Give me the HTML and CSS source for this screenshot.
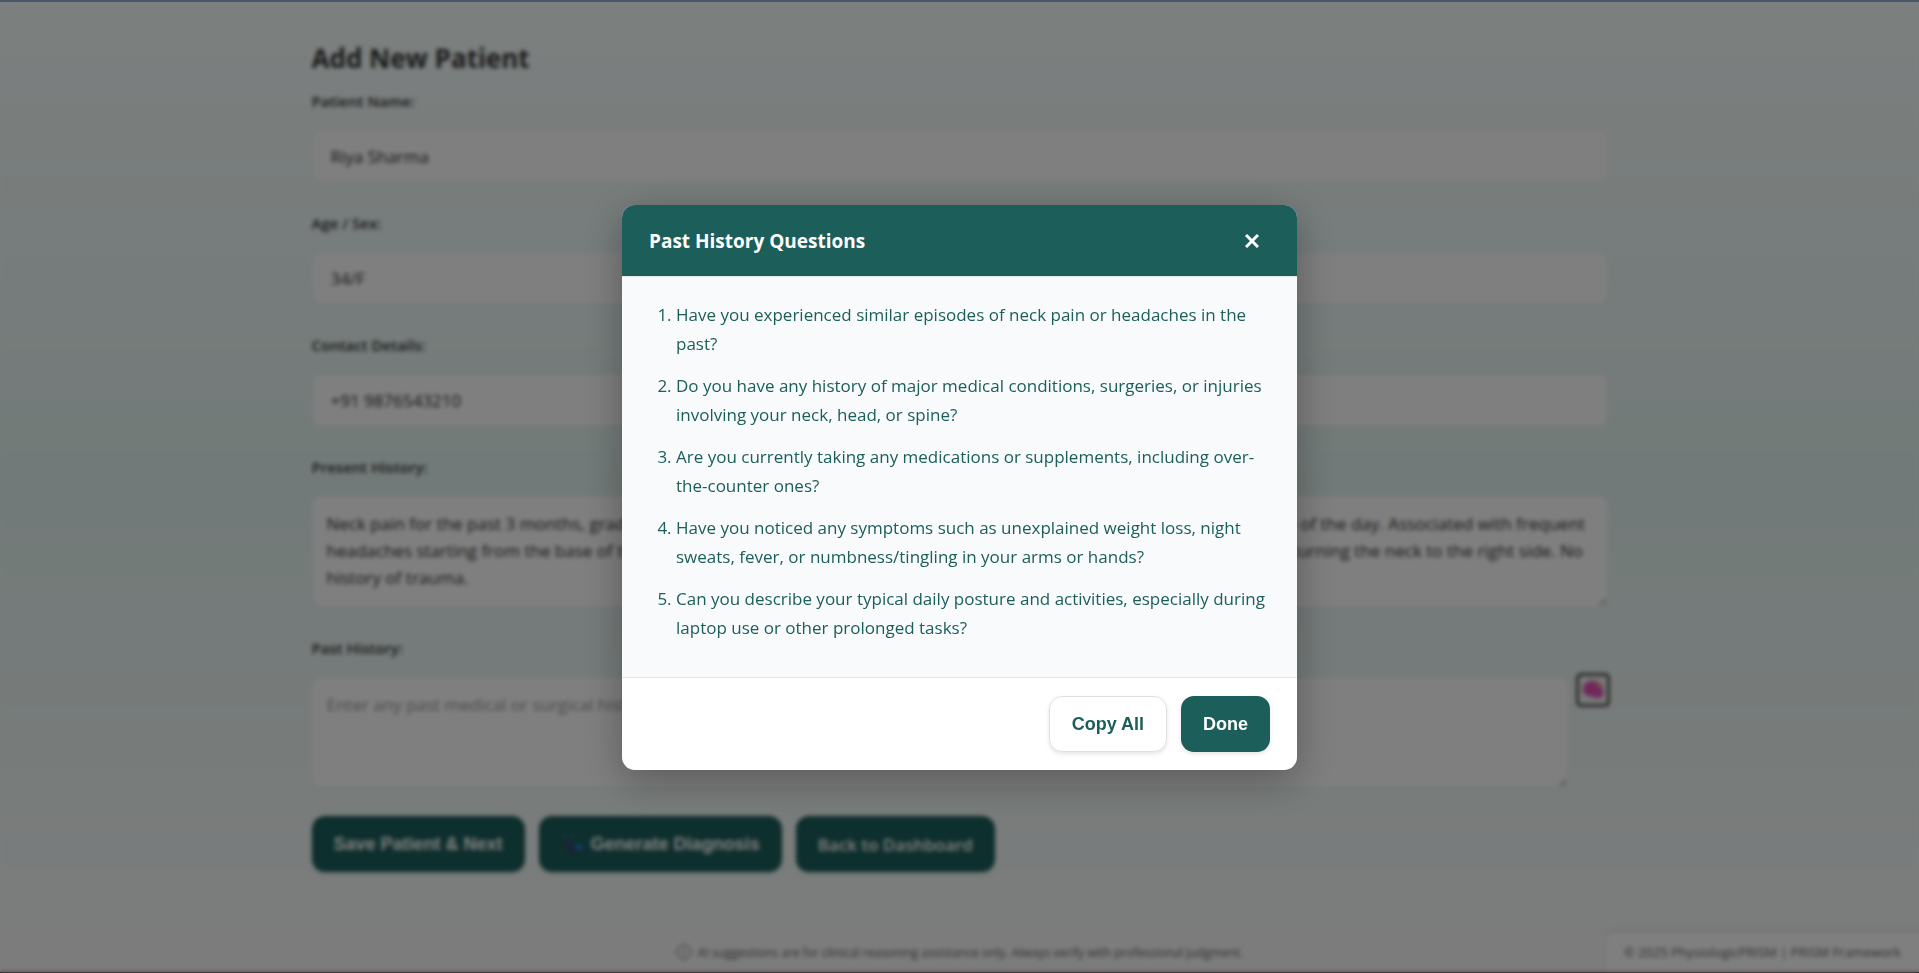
FILE: index.html
```html
<!DOCTYPE html>
<html lang="en">
<head>
    <meta charset="UTF-8">
    <meta name="viewport" content="width=device-width, initial-scale=1.0">
    <title>Add New Patient | PhysiologicPRISM</title>
    <link rel="stylesheet" href="styles.css">
</head>
<body>
    <main class="container">
        <h2>Add New Patient</h2>
        <form class="patient-form">
            <div class="form-group">
                <label for="name">Patient Name:</label>
                <input type="text" id="name" value="Riya Sharma">
            </div>
            <div class="form-group">
                <label for="ageSex">Age / Sex:</label>
                <input type="text" id="ageSex" value="34/F">
            </div>
            <div class="form-group">
                <label for="contact">Contact Details:</label>
                <input type="text" id="contact" value="+91 9876543210">
            </div>
            <div class="form-group">
                <label for="presentHistory">Present History:</label>
                <textarea id="presentHistory">Neck pain for the past 3 months, gradually worsening with longer hours of laptop work and usually more severe at the end of the day. Associated with frequent
headaches starting from the base of the skull. Pain increases with prolonged sitting, looking down at her phone and when turning the neck to the right side. No
history of trauma.</textarea>
            </div>
            <div class="form-group">
                <label for="pastHistory">Past History:</label>
                <div class="input-with-ai">
                    <textarea id="pastHistory" placeholder="Enter any past medical or surgical history"></textarea>
                    <button type="button" class="ai-btn" aria-label="Suggest past history questions">
                        <svg viewBox="0 0 24 24" width="24" height="24">
                            <path d="M2 12C1 8 4 5 7 4c3-2 8-2 11 1 3 1 5 5 4 9 1 3-1 6-4 6-3 1-5 0-7-2-4 1-9-1-9-6z" fill="#e455b8"/>
                            <path d="M12 3c5 0 9 4 10 9-3 1-4-1-6-2s-5-3-4-7z" fill="#e87a9c"/>
                            <path d="M6 8c3-2 4 1 3 3m4-7c-2 3 1 4 3 4m-9 6c3 1 5-2 7-1m3-2c2 1 3 3 2 5" fill="none" stroke="#c8389f" stroke-width="1"/>
                        </svg>
                    </button>
                </div>
            </div>
            <div class="form-actions">
                <button type="submit" class="btn">Save Patient &amp; Next</button>
                <button type="button" class="btn">
                    <svg viewBox="0 0 22 22" width="22" height="22">
                        <path d="M4 2v4M11 2v4" fill="none" stroke="#2f7896" stroke-width="2"/>
                        <path d="M4 7c0 6 7 6 7 0M8 12c0 9 9 9 10 3" fill="none" stroke="#453a80" stroke-width="3"/>
                        <circle cx="18" cy="14" r="3" fill="#2186e0"/>
                    </svg>
                    Generate Diagnosis
                </button>
                <a href="#" class="btn btn-link">Back to Dashboard</a>
            </div>
        </form>
    </main>

    <footer class="footer">
        <p class="ai-note">
            <svg viewBox="0 0 16 16" width="16" height="16">
                <circle cx="8" cy="8" r="7" fill="none" stroke="currentColor" stroke-width="1"/>
                <path d="M8 7v5M8 4v2" stroke="currentColor" stroke-width="1"/>
            </svg>
            AI suggestions are for clinical reasoning assistance only. Always verify with professional judgment.
        </p>
        <p class="copyright">© 2025 PhysiologicPRISM | PRISM Framework</p>
    </footer>

    <div class="modal-overlay">
        <div class="modal" role="dialog" aria-labelledby="modalTitle">
            <div class="modal-header">
                <h3 id="modalTitle">Past History Questions</h3>
                <button type="button" class="close-btn" aria-label="Close">
                    <svg viewBox="0 0 14 14" width="14" height="14">
                        <path d="M1 1l12 12M13 1L1 13" stroke="currentColor" stroke-width="3"/>
                    </svg>
                </button>
            </div>
            <div class="modal-body">
                <ol>
                    <li>Have you experienced similar episodes of neck pain or headaches in the past?</li>
                    <li>Do you have any history of major medical conditions, surgeries, or injuries involving your neck, head, or spine?</li>
                    <li>Are you currently taking any medications or supplements, including over-the-counter ones?</li>
                    <li>Have you noticed any symptoms such as unexplained weight loss, night sweats, fever, or numbness/tingling in your arms or hands?</li>
                    <li>Can you describe your typical daily posture and activities, especially during laptop use or other prolonged tasks?</li>
                </ol>
            </div>
            <div class="modal-footer">
                <button type="button" class="btn btn-secondary">Copy All</button>
                <button type="button" class="btn">Done</button>
            </div>
        </div>
    </div>
</body>
</html>
```
FILE: styles.css
```css
* {
    margin: 0;
    padding: 0;
    box-sizing: border-box;
}

body {
    font-family: 'Segoe UI', 'Open Sans', 'Noto Sans', sans-serif;
    font-size: 17px;
    color: #333;
    background: linear-gradient(180deg, #f8fffe 0%, #e4f5f2 50%, #f8fbfa 100%);
    border-top: 2px solid #455a66;
    border-bottom: 1px solid #2b1a1e;
    min-height: 100vh;
    display: flex;
    flex-direction: column;
}

.container {
    width: 100%;
    max-width: 1350px;
    margin: 0 auto;
    padding: 36px 27px;
    flex: 1;
}

h2 {
    font-size: 26px;
    line-height: 40px;
    margin-bottom: 10px;
}

.form-group {
    margin-bottom: 28px;
}

.form-group label {
    display: block;
    font-size: 15px;
    font-weight: 600;
    line-height: 26px;
    margin-bottom: 16px;
}

input,
textarea {
    display: block;
    width: 100%;
    font-family: inherit;
    font-size: 17px;
    color: #333;
    background: #fff;
    border: 1px solid #f0f3f3;
    border-radius: 9px;
}

input {
    height: 52px;
    padding: 0 18px;
}

textarea {
    height: 111px;
    padding: 13px 14px;
    line-height: 27px;
    resize: vertical;
}

textarea::placeholder {
    color: #999;
}

.input-with-ai {
    display: flex;
    align-items: flex-start;
    gap: 8px;
}

.input-with-ai textarea {
    flex: 1;
}

.ai-btn {
    display: flex;
    align-items: center;
    justify-content: center;
    width: 34px;
    height: 34px;
    margin: -4px -2px 0 0;
    background: #f0f3f3;
    border: 3px solid #555;
    border-radius: 5px;
    cursor: pointer;
}

.form-actions {
    display: flex;
    flex-wrap: wrap;
    gap: 14px;
}

.btn {
    display: inline-flex;
    align-items: center;
    justify-content: center;
    gap: 8px;
    height: 56px;
    padding: 0 22px;
    font-family: Arial, 'Liberation Sans', sans-serif;
    font-size: 18px;
    font-weight: 600;
    color: #fff;
    background: #1b5e5a;
    border: none;
    border-radius: 13px;
    box-shadow: 0 2px 4px rgba(0, 0, 0, 0.1);
    text-decoration: none;
    cursor: pointer;
}

.btn-link {
    font-family: 'Segoe UI', 'Open Sans', 'Noto Sans', sans-serif;
    font-size: 17px;
}

.btn-secondary {
    color: #1b5e5a;
    background: #fff;
    border: 1px solid #e0e0e0;
}

.footer {
    display: grid;
    grid-template-columns: 1fr auto 1fr;
    align-items: center;
    background: #f9f9f9;
    color: #666;
}

.ai-note {
    grid-column: 2;
    display: flex;
    align-items: center;
    gap: 6px;
    font-size: 12px;
}

.copyright {
    justify-self: end;
    padding: 9px 18px;
    font-size: 13px;
    line-height: 22px;
    background: #fff;
    border-top-left-radius: 9px;
    box-shadow: 0 -2px 4px rgba(0, 0, 0, 0.1);
}

.modal-overlay {
    position: fixed;
    inset: 2px 0 0;
    display: flex;
    align-items: center;
    justify-content: center;
    background: rgba(0, 0, 0, 0.5);
    backdrop-filter: blur(2px);
}

.modal {
    width: 90%;
    max-width: 675px;
    background: #fff;
    border-radius: 13px;
    box-shadow: 0 10px 40px rgba(0, 0, 0, 0.3);
    overflow: hidden;
}

.modal-header {
    display: flex;
    align-items: center;
    justify-content: space-between;
    height: 72px;
    padding: 0 27px;
    color: #fff;
    background: #1b5e5a;
    border-bottom: 1px solid #e0e5e8;
}

.modal-header h3 {
    font-size: 19px;
    font-weight: 700;
}

.close-btn {
    display: flex;
    align-items: center;
    justify-content: center;
    width: 36px;
    height: 36px;
    color: #fff;
    background: none;
    border: none;
    cursor: pointer;
}

.modal-body {
    padding: 23px 27px 22px;
    color: #1b5e5a;
    background: #f8fafc;
}

.modal-body ol {
    padding-left: 27px;
}

.modal-body li {
    line-height: 29px;
    margin-bottom: 13px;
}

.modal-footer {
    display: flex;
    justify-content: flex-end;
    gap: 14px;
    padding: 18px 27px;
    border-top: 1px solid #e0e5e8;
}
```
